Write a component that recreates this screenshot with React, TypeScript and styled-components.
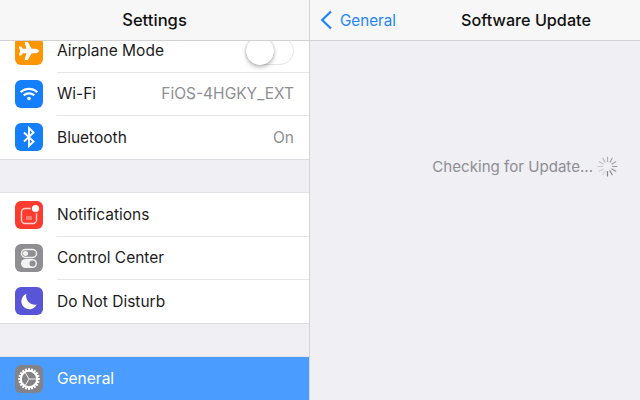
import React from 'react';
import styled, { createGlobalStyle } from 'styled-components';
import { FaPlane, FaWifi } from 'react-icons/fa';

const GlobalStyle = createGlobalStyle`
  html, body {
    margin: 0;
    padding: 0;
    width: 640px;
    height: 400px;
    overflow: hidden;
    background: #efeff4;
    font-family: 'Inter', 'Liberation Sans', sans-serif;
    -webkit-font-smoothing: antialiased;
  }
`;

const BluetoothGlyph = () => (
  <svg width="28" height="28" viewBox="0 0 28 28">
    <path
      d="M9 9.5 L18.5 18.5 L14 23 L14 5 L18.5 9.5 L9 18.5"
      fill="none"
      stroke="#fff"
      strokeWidth="1.9"
    />
  </svg>
);

const NotificationGlyph = () => (
  <svg width="28" height="28" viewBox="0 0 28 28">
    <rect x="6.5" y="7.5" width="15" height="15" rx="3.5" fill="none" stroke="#ffd0cc" strokeWidth="1.4" />
    <circle cx="20.5" cy="7.5" r="4.8" fill="#ff3b30" />
    <circle cx="20.5" cy="7.5" r="3.6" fill="#fff" />
    <rect x="11" y="15" width="6" height="4" fill="#ff7a72" />
  </svg>
);

const ControlGlyph = () => (
  <svg width="28" height="28" viewBox="0 0 28 28">
    <rect x="6.5" y="5.5" width="15" height="8" rx="4" fill="none" stroke="#f2f2f2" strokeWidth="1.4" />
    <circle cx="10.5" cy="9.5" r="2.6" fill="#f2f2f2" />
    <rect x="6" y="15" width="16" height="9" rx="4.5" fill="#f2f2f2" />
    <circle cx="17.5" cy="19.5" r="3" fill="#8e8e93" />
  </svg>
);

const MoonGlyph = () => (
  <svg width="28" height="28" viewBox="0 0 28 28">
    <path d="M11.5 6.8 A8 8 0 1 0 21.7 17.5 A8.5 8.5 0 0 1 11.5 6.8 Z" fill="#fff" />
  </svg>
);

const GearGlyph = () => (
  <svg width="28" height="28" viewBox="0 0 28 28">
    <circle cx="14" cy="14" r="8.2" fill="none" stroke="#fff" strokeWidth="2.1" />
    {Array.from({ length: 20 }, (_, i) => (
      <rect key={i} x="13" y="3.2" width="2" height="3.2" fill="#fff" transform={`rotate(${i * 18} 14 14)`} />
    ))}
    <g stroke="#fff" strokeWidth="0.9">
      <line x1="14" y1="14" x2="21" y2="14" />
      <line x1="14" y1="14" x2="10.5" y2="8" />
      <line x1="14" y1="14" x2="10.5" y2="20" />
    </g>
  </svg>
);

const Spinner = () => (
  <SpinnerSvg viewBox="0 0 21 21">
    {Array.from({ length: 12 }, (_, i) => (
      <line
        key={i}
        x1="10.5"
        y1="1"
        x2="10.5"
        y2="5.5"
        stroke="#77777c"
        strokeWidth="1.2"
        strokeLinecap="round"
        opacity={0.2 + (i / 11) * 0.7}
        transform={`rotate(${i * 30 + 210} 10.5 10.5)`}
      />
    ))}
  </SpinnerSvg>
);

export default function App() {
  return (
    <Screen>
      <GlobalStyle />
      <Sidebar>
        <NavBar>
          <NavTitle>Settings</NavTitle>
        </NavBar>
        <ScrollArea>
          <Group>
            <Row>
              <IconTile color="#ff9500">
                <FaPlane size={20} color="#fff" />
              </IconTile>
              <RowBody>
                <RowLabel>Airplane Mode</RowLabel>
                <Toggle />
              </RowBody>
            </Row>
            <Row>
              <IconTile color="#147efb">
                <FaWifi size={18} color="#fff" />
              </IconTile>
              <RowBody>
                <RowLabel>Wi-Fi</RowLabel>
                <RowValue>FiOS-4HGKY_EXT</RowValue>
              </RowBody>
            </Row>
            <Row last>
              <IconTile color="#147efb">
                <BluetoothGlyph />
              </IconTile>
              <RowBody last>
                <RowLabel>Bluetooth</RowLabel>
                <RowValue>On</RowValue>
              </RowBody>
            </Row>
          </Group>
          <Group>
            <Row>
              <IconTile color="#ff3b30">
                <NotificationGlyph />
              </IconTile>
              <RowBody>
                <RowLabel>Notifications</RowLabel>
              </RowBody>
            </Row>
            <Row>
              <IconTile color="#8e8e93">
                <ControlGlyph />
              </IconTile>
              <RowBody>
                <RowLabel>Control Center</RowLabel>
              </RowBody>
            </Row>
            <Row last>
              <IconTile color="#5856d6">
                <MoonGlyph />
              </IconTile>
              <RowBody last>
                <RowLabel>Do Not Disturb</RowLabel>
              </RowBody>
            </Row>
          </Group>
          <Group>
            <Row selected>
              <IconTile color="#828287">
                <GearGlyph />
              </IconTile>
              <RowBody last>
                <RowLabel selected>General</RowLabel>
              </RowBody>
            </Row>
          </Group>
        </ScrollArea>
      </Sidebar>
      <Detail>
        <DetailBar>
          <svg width="14" height="20" viewBox="0 0 14 20">
            <path d="M12 1.5 L3.2 10 L12 18.5" fill="none" stroke="#1f84fb" strokeWidth="2.2" />
          </svg>
          <BackLabel>General</BackLabel>
          <DetailTitle>Software Update</DetailTitle>
        </DetailBar>
        <DetailBody>
          <StatusText>Checking for Update...</StatusText>
          <Spinner />
        </DetailBody>
      </Detail>
    </Screen>
  );
}

const Screen = styled.div`
  display: flex;
  width: 640px;
  height: 400px;
  overflow: hidden;
  background: #efeff4;
`;

const Sidebar = styled.div`
  display: flex;
  flex-direction: column;
  width: 309px;
  flex-shrink: 0;
  border-right: 1px solid #d4d4d8;
`;

const NavBar = styled.div`
  display: flex;
  align-items: center;
  justify-content: center;
  height: 40px;
  flex-shrink: 0;
  background: #f7f7f7;
  border-bottom: 1px solid #d2d2d4;
`;

const NavTitle = styled.div`
  font-size: 16.6px;
  font-weight: 450;
  color: #111;
`;

const ScrollArea = styled.div`
  flex: 1;
  overflow: hidden;

  /* list is scrolled a little, the first row slides under the bar */
  > div:first-child {
    margin-top: -13px;
  }
`;

const Group = styled.div`
  margin-bottom: 32px;
  background: #fff;
  border-top: 1px solid #e2e2e6;
  border-bottom: 1px solid #dcdce0;
`;

const Row = styled.div<{ selected?: boolean; last?: boolean }>`
  display: flex;
  align-items: center;
  gap: 14px;
  height: ${(p) => (p.last ? 44 : 43)}px;
  padding-left: 15px;
  background: ${(p) => (p.selected ? '#4a9dfe' : '#fff')};
`;

const IconTile = styled.div<{ color: string }>`
  display: flex;
  align-items: center;
  justify-content: center;
  width: 28px;
  height: 28px;
  flex-shrink: 0;
  border-radius: 6px;
  background: ${(p) => p.color};
`;

const RowBody = styled.div<{ last?: boolean }>`
  display: flex;
  flex: 1;
  align-items: center;
  justify-content: space-between;
  align-self: stretch;
  padding-right: 15px;
  box-shadow: ${(p) => (p.last ? 'none' : '0 1px 0 #e6e6e8')};
`;

const RowLabel = styled.span<{ selected?: boolean }>`
  font-size: 15.5px;
  color: ${(p) => (p.selected ? '#fff' : '#1c1c1e')};
`;

const RowValue = styled.span`
  font-size: 15.5px;
  color: #8e8e93;
`;

const Toggle = styled.div`
  position: relative;
  width: 48px;
  height: 28px;
  box-sizing: border-box;
  border: 1px solid #e5e5e5;
  border-radius: 14px;
  background: #fff;

  &::before {
    content: '';
    position: absolute;
    left: -1px;
    top: -1px;
    width: 28px;
    height: 28px;
    border-radius: 50%;
    background: #fff;
    box-shadow: 0 2px 4px rgba(0, 0, 0, 0.3), 0 0 1px rgba(0, 0, 0, 0.3);
  }
`;

const Detail = styled.div`
  display: flex;
  flex: 1;
  flex-direction: column;
`;

const DetailBar = styled.div`
  display: flex;
  align-items: center;
  height: 40px;
  flex-shrink: 0;
  padding-left: 9px;
  background: #f7f7f7;
  border-bottom: 1px solid #d2d2d4;
`;

const BackLabel = styled.span`
  margin-left: 7px;
  font-size: 15.2px;
  color: #1f84fb;
`;

const DetailTitle = styled.div`
  margin-left: 65px;
  font-size: 16.2px;
  font-weight: 450;
  color: #111;
`;

const DetailBody = styled.div`
  display: flex;
  align-items: center;
  justify-content: flex-end;
  gap: 4px;
  padding: 115px 22px 0 0;
`;

const StatusText = styled.span`
  font-size: 15.1px;
  color: #8e8e93;
`;

const SpinnerSvg = styled.svg`
  width: 21px;
  height: 21px;
`;
